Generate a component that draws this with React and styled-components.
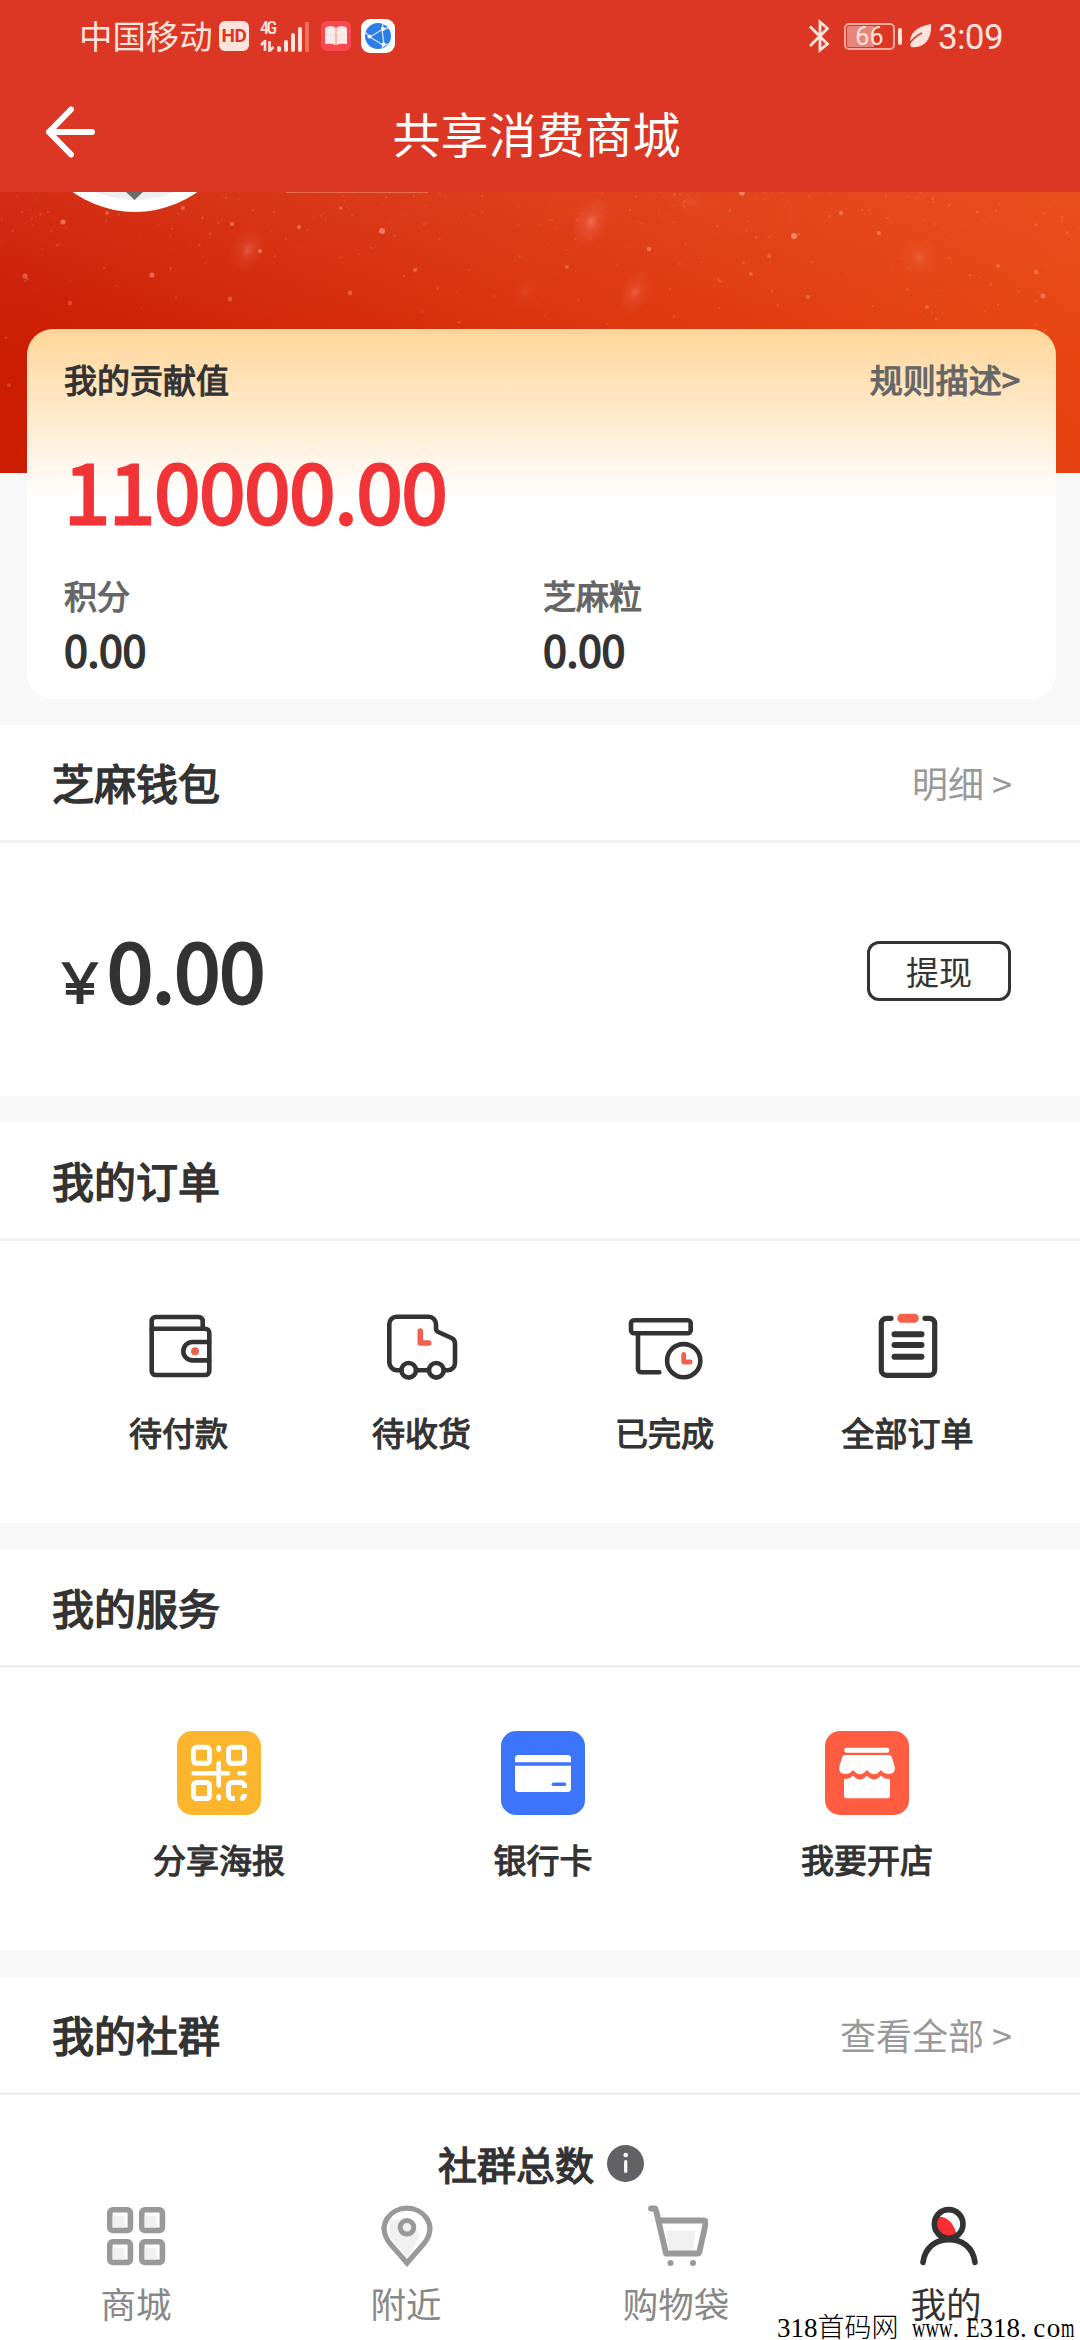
import styled, { createGlobalStyle } from 'styled-components';

const GlobalStyle = createGlobalStyle`
	* {
		box-sizing: border-box;
	}
	body {
		margin: 0;
		background: #f8f8f8;
		color: #333;
		font-family: 'Noto Sans CJK SC', 'Noto Sans', sans-serif;
	}
	svg {
		display: block;
		flex: none;
	}
`;

const Page = styled.div`
	position: relative;
	display: flex;
	flex-direction: column;
	width: 1080px;
	height: 2340px;
	overflow: hidden;
	background: #f8f8f8;
`;

/* status bar + title */

const TopBar = styled.header`
	flex: none;
	height: 192px;
	background: #db3724;
	color: #fff;
`;

const StatusBar = styled.div`
	display: flex;
	align-items: center;
	justify-content: space-between;
	height: 72px;
	padding: 0 77px 0 79px;
	color: #ffe3dc;
`;

const StatusGroup = styled.div`
	display: flex;
	align-items: center;
`;

const Carrier = styled.span`
	width: 140px;
	font-size: 33.4px;
	line-height: 40px;
	margin-top: -2px;
`;

const HdBadge = styled.span`
	width: 30px;
	height: 30px;
	border-radius: 6px;
	background: #ffe3dc;
	color: #db3724;
	font: 700 19px/30px Roboto, sans-serif;
	text-align: center;
	letter-spacing: -0.5px;
`;

const Network = styled.div`
	display: flex;
	width: 51px;
	height: 34px;
	margin: 0 10px 0 11px;
`;

const NetworkType = styled.div`
	display: flex;
	flex-direction: column;
	justify-content: space-between;
	width: 17px;
	padding: 1px 0;
	font: 500 18px/15px 'Roboto Condensed', Roboto, sans-serif;
	letter-spacing: -2.5px;
`;

const AppIcons = styled.div`
	display: flex;
	align-items: center;
	gap: 10px;
`;

const Battery = styled.div`
	display: flex;
	align-items: center;
	margin: 0 6px 0 15px;
`;

const BatteryBody = styled.div`
	width: 51px;
	height: 27px;
	border: 2px solid #f5a89c;
	border-radius: 5px;
	background: linear-gradient(to right, #e8857a 60%, transparent 60%);
	background-clip: content-box;
	padding: 1px;
	font: 400 25px/22px Roboto, sans-serif;
	text-align: center;
`;

const BatteryCap = styled.div`
	width: 4px;
	height: 17px;
	margin-left: 3px;
	border-radius: 2px;
	background: #ffe3dc;
`;

const Clock = styled.span`
	margin: 3px 0 0 6px;
	font: 400 35px/40px Roboto, sans-serif;
	letter-spacing: -0.6px;
`;

const TitleBar = styled.div`
	display: grid;
	grid-template-columns: 120px 1fr 120px;
	align-items: center;
	height: 120px;
`;

const Title = styled.h1`
	margin: 0;
	font-size: 48px;
	font-weight: 400;
	line-height: 56px;
	text-align: center;
	padding-right: 7px;
`;

/* hero + contribution card */

const Hero = styled.div`
	flex: none;
	height: 281px;
	overflow: hidden;
`;

const Card = styled.section`
	position: relative;
	flex: none;
	width: 1029px;
	height: 370px;
	margin: -144px 0 26px 27px;
	padding: 30px 36px 0 37px;
	border-radius: 26px;
	background: linear-gradient(#ffd699 0, #ffebcf 90px, #fff 168px);
`;

const CardHead = styled.div`
	display: flex;
	justify-content: space-between;
	line-height: 40px;
`;

const Bold = styled.span`
	color: ${({ $color }) => $color || '#333'};
	font-size: ${({ $size }) => $size}px;
	letter-spacing: ${({ $gap }) => $gap || 0}px;
	-webkit-text-stroke: ${({ $size }) => $size / 28}px currentColor;
`;

const Contribution = styled.div`
	display: flex;
	height: 81px;
	margin: 49px 0 46px;
	line-height: 81px;
`;

const Stats = styled.div`
	display: grid;
	grid-template-columns: 479px 1fr;
`;

const Stat = styled.div`
	display: flex;
	flex-direction: column;
	gap: 13px;
	line-height: 40px;
`;

/* sections */

const Section = styled.section`
	flex: none;
	height: ${({ $height }) => $height}px;
	margin-bottom: 27px;
	background: #fff;
`;

const SectionHead = styled.div`
	display: flex;
	align-items: center;
	justify-content: space-between;
	height: 118px;
	padding: 0 68px 1px 52px;
	border-bottom: 3px solid #f0f0f0;
	line-height: 56px;
`;

const More = styled.span`
	color: #999;
	font-size: 36px;
`;

const Wallet = styled.div`
	display: flex;
	align-items: center;
	justify-content: space-between;
	height: 253px;
	padding: 2px 69px 0 53px;
`;

const Amount = styled.div`
	display: flex;
	align-items: baseline;
	padding-top: 6px;
	line-height: 81px;
`;

const Withdraw = styled.button`
	width: 144px;
	height: 60px;
	padding: 0;
	border: 3px solid #333;
	border-radius: 12px;
	background: #fff;
	color: #333;
	font: 400 33px/50px 'Noto Sans CJK SC', sans-serif;
`;

const Entries = styled.div`
	display: grid;
	grid-template-columns: repeat(${({ $count }) => $count}, 1fr);
	width: 972px;
	margin-left: 57px;
	padding-top: ${({ $top }) => $top}px;
`;

const Entry = styled.div`
	display: flex;
	flex-direction: column;
	align-items: center;
	gap: ${({ $gap }) => $gap}px;
	line-height: 40px;
`;

const Tile = styled.div`
	width: 84px;
	height: 84px;
	border-radius: 15px;
	background: ${({ $color }) => $color};
`;

const Community = styled.div`
	display: flex;
	align-items: center;
	justify-content: center;
	gap: 13px;
	padding: 44px 0 0 2px;
	line-height: 48px;
`;

/* bottom tabs */

const TabBar = styled.nav`
	position: absolute;
	left: 0;
	bottom: 0;
	display: grid;
	grid-template-columns: repeat(4, 270px);
	width: 100%;
	height: 148px;
	padding: 12px 0 0 1px;
	background: #fff;
`;

const Tab = styled.div`
	display: flex;
	flex-direction: column;
	align-items: center;
	gap: 15px;
	color: ${({ $active }) => ($active ? '#333' : '#888')};
	font-size: 35.5px;
	line-height: 40px;
`;

const Watermark = styled.div`
	position: absolute;
	left: 777px;
	bottom: 0;
	height: 24px;
	color: #000;
	font: 27px/24px 'Liberation Serif', 'Noto Sans CJK SC', serif;
	white-space: pre;
`;

const Han = styled.span`
	font-weight: 300;
`;

const Squeeze = styled.span`
	display: inline-block;
	margin-right: -${({ $cut }) => $cut}px;
	transform: scaleX(${({ $x }) => $x});
	transform-origin: left;
`;

const Spaced = styled.span`
	letter-spacing: ${({ $gap }) => $gap}px;
`;

/* [x, y, radius, opacity] */
const brightStars = [
	[63, 30, 2.6, 0.5], [232, 32, 2, 0.5], [299, 35, 2, 0.5], [382, 39, 3, 0.55],
	[794, 44, 3, 0.6], [879, 41, 2, 0.5], [649, 57, 2.2, 0.5], [25, 84, 2.6, 0.4],
	[152, 83, 2.6, 0.45], [415, 78, 2, 0.4], [841, 21, 2, 0.5], [742, 1, 2.6, 0.6],
	[1036, 80, 2.2, 0.4], [1043, 104, 2.4, 0.5], [350, 101, 2.4, 0.35], [230, 107, 2.4, 0.35],
	[808, 105, 2, 0.4], [70, 111, 2.2, 0.3], [927, 115, 2, 0.35], [769, 64, 2, 0.35],
	[998, 74, 2, 0.35], [751, 82, 2, 0.35], [567, 75, 2, 0.35], [260, 59, 2, 0.5],
	[107, 21, 2, 0.35], [183, 16, 2, 0.4], [341, 16, 1.8, 0.4], [9, 193, 2, 0.25],
];

/* [x, y, rx, ry, opacity] */
const glows = [
	[591, 30, 18, 26, 0.5], [248, 58, 17, 24, 0.36], [919, 66, 20, 20, 0.28],
	[635, 100, 15, 24, 0.36], [525, 100, 13, 18, 0.14], [692, 10, 20, 14, 0.14], [790, 24, 14, 18, 0.06],
];

let seed = 7;
const random = () => {
	seed = (seed * 16807) % 2147483647;
	return seed / 2147483647;
};
const dust = Array.from({ length: 300 }, () => [
	random() * 1080,
	random() * random() * 190,
	0.7 + random() * 0.8,
	0.06 + random() * 0.2,
]);

const HeroArt = () => (
	<svg width="1080" height="281" viewBox="0 0 1080 281">
		<defs>
			<linearGradient id="sky" x1="0" y1="0.3" x2="1" y2="0">
				<stop offset="0" stopColor="#cc1d02" />
				<stop offset="0.45" stopColor="#dc350d" />
				<stop offset="1" stopColor="#ec4c12" />
			</linearGradient>
			<radialGradient id="glow">
				<stop offset="0" stopColor="#ffa08e" />
				<stop offset="0.35" stopColor="#ff8a7a" stopOpacity="0.4" />
				<stop offset="1" stopColor="#ff8a7a" stopOpacity="0" />
			</radialGradient>
			<linearGradient id="haze" x1="0" y1="0" x2="0" y2="1">
				<stop offset="0" stopColor="#e05a50" stopOpacity="0.2" />
				<stop offset="0.6" stopColor="#e05a50" stopOpacity="0" />
			</linearGradient>
		</defs>
		<rect width="1080" height="281" fill="url(#sky)" />
		<rect width="1080" height="281" fill="url(#haze)" />
		{glows.map(([x, y, rx, ry, o]) => (
			<ellipse key={x} cx={x} cy={y} rx={rx} ry={ry} fill="url(#glow)" opacity={o} transform={`rotate(25 ${x} ${y})`} />
		))}
		{[...dust, ...brightStars].map(([x, y, r, o], i) => (
			<circle key={i} cx={x} cy={y} r={r} fill="#ffb09c" opacity={o} />
		))}
		<rect x="286" width="142" height="1" fill="#e86a4c" />
		<circle cx="135" cy="-87" r="107" fill="#fff" />
		<circle cx="135" cy="-93" r="101" fill="#eee" />
		<path d="M126 0h17l-8.500 8z" fill="#6b6b6b" />
	</svg>
);

const BackIcon = () => (
	<svg width="120" height="60" viewBox="0 0 120 60">
		<path d="M71 7.500 49 30l22 22.500M49 30h43" fill="none" stroke="#fff" strokeWidth="6" strokeLinecap="round" strokeLinejoin="round" />
	</svg>
);

const SignalBars = () => (
	<svg width="34" height="34" viewBox="0 0 34 34" fill="#ffe3dc">
		<rect x="0" y="27" width="4" height="6" rx="2" />
		<rect x="7" y="21" width="4" height="12" rx="2" />
		<rect x="14" y="14" width="4" height="19" rx="2" />
		<rect x="21" y="8" width="4" height="25" rx="2" />
		<rect x="28" y="3" width="4" height="30" rx="1" fill="#f0705f" />
	</svg>
);

const DataArrows = () => (
	<svg width="15" height="12" viewBox="0 0 15 12">
		<path d="M1 5l4-4v10M9.500 1v10l4-4" fill="none" stroke="#ffe3dc" strokeWidth="2.600" />
	</svg>
);

const BookIcon = () => (
	<svg width="30" height="30" viewBox="0 0 30 30">
		<rect width="30" height="30" rx="6" fill="#fb4752" />
		<path d="M4 7q5.500-4 11 0 5.500-4 11 0v16q-5.500-1-11 1-5.500-2-11-1z" fill="#ffe9e6" />
		<path d="M15 6v18" stroke="#fba5a5" strokeWidth="1.500" />
	</svg>
);

const BrowserIcon = () => (
	<svg width="34" height="34" viewBox="0 0 34 34">
		<rect width="34" height="34" rx="9" fill="#fff" />
		<circle cx="17" cy="17" r="13" fill="#2b7de9" />
		<path d="M4 13l5 5 13 8M9 18 22 10M22 5l-1 5 2 16-2 3M22 10l6-1M22 26l7-1" fill="none" stroke="#cfe6ff" strokeWidth="1.300" />
		<g fill="#fff">
			<circle cx="8.500" cy="17.500" r="2" />
			<circle cx="22" cy="10" r="2" />
			<circle cx="22.500" cy="25.500" r="2" />
		</g>
	</svg>
);

const BluetoothIcon = () => (
	<svg width="20" height="34" viewBox="0 0 20 34">
		<path d="M1 7.500 18.500 25 11 31V3l7.500 6.500L1 27" fill="none" stroke="#ffe3dc" strokeWidth="2.800" />
	</svg>
);

const LeafIcon = () => (
	<svg width="24" height="24" viewBox="0 0 24 24">
		<path d="M23 0C24 14 17 25 3 23 0 14 4 3 23 0z" fill="#ffe3dc" />
		<path d="M0 22Q5 13 14 9" fill="none" stroke="#db3724" strokeWidth="1.500" />
	</svg>
);

const ink = { fill: 'none', stroke: '#333', strokeWidth: 4.6, strokeLinecap: 'round', strokeLinejoin: 'round' };

const WalletIcon = () => (
	<svg width="72" height="72" viewBox="0 0 72 72" {...ink}>
		<path d="M8.700 18.700V11a4 4 0 0 1 4-4h43a4 4 0 0 1 4 4v7.700" />
		<path d="M8.700 18.700h53.600a4 4 0 0 1 4 4V61a4 4 0 0 1-4 4H12.700a4 4 0 0 1-4-4z" />
		<path d="M66.300 32H49.500a9.200 9.200 0 0 0 0 18.400h16.800" />
		<circle cx="52" cy="41.300" r="4" fill="#f0604d" stroke="none" />
	</svg>
);

const TruckIcon = () => (
	<svg width="72" height="72" viewBox="0 0 72 72" {...ink}>
		<path d="M15.400 60.300H11a8 8 0 0 1-7.700-8V14a7.300 7.300 0 0 1 7.300-7.300h32A7.400 7.400 0 0 1 50 14v4.500a4 4 0 0 0 2.200 3.500l13.300 6a6 6 0 0 1 3.500 5.500V53a7.300 7.300 0 0 1-7.300 7.300H58M30 60.300h12.700" />
		<circle cx="22.700" cy="60.300" r="7.300" />
		<circle cx="50.300" cy="60.300" r="7.300" />
		<path d="M34.300 21v12h8.500" stroke="#f0604d" strokeWidth="5.500" />
	</svg>
);

const DoneIcon = () => (
	<svg width="76" height="72" viewBox="-2 0 76 72" {...ink}>
		<rect x="2" y="10.300" width="59.700" height="13" rx="3" />
		<path d="M9 23.300V59a3.300 3.300 0 0 0 3.300 3.300h18" />
		<circle cx="54.700" cy="50.700" r="16.600" />
		<path d="M54.700 44.500v7.500h6.500" stroke="#f0604d" strokeWidth="4.800" />
	</svg>
);

const ListIcon = () => (
	<svg width="72" height="72" viewBox="0 0 72 72" {...ink} strokeWidth="5.200">
		<path d="M19 8.300h-4.500a5.200 5.200 0 0 0-5.200 5.200v46.600a5.200 5.200 0 0 0 5.200 5.200h43a5.200 5.200 0 0 0 5.200-5.200V13.500a5.200 5.200 0 0 0-5.200-5.200H53" />
		<path d="M22.500 24.200h27M22.500 35h27M22.500 46.700h27" strokeWidth="6" />
		<rect x="25.300" y="3.700" width="21.500" height="9" rx="4.500" fill="#f9604a" stroke="none" />
	</svg>
);

const QrIcon = () => (
	<svg width="84" height="84" viewBox="0 0 84 84" fill="none" stroke="#fff" strokeWidth="5" strokeLinecap="round">
		<rect x="16.500" y="16.300" width="16" height="16" rx="3" />
		<rect x="51.500" y="16.300" width="16" height="16" rx="3" />
		<rect x="16.500" y="51.500" width="16" height="16" rx="3" />
		<path d="M41.700 16.500v2M41.700 32v22.500M41.700 65.300v2.200M16.500 42.300h34.500M62.500 42.300h5" strokeWidth="4.600" />
		<path d="M58 67.500h-3a3.500 3.500 0 0 1-3.500-3.500v-9a3.500 3.500 0 0 1 3.500-3.500h9a3.500 3.500 0 0 1 3.500 3.500v2M67.500 63q0 4.500-4 4.500" strokeLinecap="butt" />
	</svg>
);

const BankIcon = () => (
	<svg width="84" height="84" viewBox="0 0 84 84">
		<rect x="14" y="24" width="56" height="37" rx="3.500" fill="#fff" />
		<path d="M14 33h56" stroke="#3c75fb" strokeWidth="3.300" />
		<path d="M52.500 53.300h11" stroke="#3c75fb" strokeWidth="3.600" strokeLinecap="round" />
	</svg>
);

const ShopIcon = () => (
	<svg width="84" height="84" viewBox="0 0 84 84" fill="#fff">
		<rect x="19.300" y="16.700" width="45" height="5" rx="2.200" />
		<path d="M20 24h44q2 0 2.600 1.800l3.100 9.700c1.800 9-9.700 9.500-13.700 3.500q-7 8.500-14 0-7 8.500-14 0c-4 6-15.500 5.500-13.700-3.500l3.100-9.700Q18 24 20 24z" />
		<path d="M19 48q5 .5 9-3.500 7 8 14 0 7 8 14 0 4 4 9 3.500v17a2.300 2.300 0 0 1-2.300 2.300H21.300A2.300 2.300 0 0 1 19 65z" />
	</svg>
);

const InfoIcon = () => (
	<svg width="37" height="37" viewBox="0 0 37 37">
		<circle cx="18.500" cy="18.500" r="18.500" fill="#626266" />
		<circle cx="18.700" cy="10" r="2.300" fill="#fff" />
		<path d="M18.700 16.500v10" stroke="#fff" strokeWidth="3.200" strokeLinecap="round" />
	</svg>
);

const MallIcon = () => (
	<svg width="64" height="64" viewBox="0 0 64 64">
		{[3, 35].map((y) =>
			[3, 35].map((x) => (
				<g key={`${x}${y}`}>
					<rect x={x + 2.8} y={y + 2.8} width="20.600" height="20.600" rx="3" fill="#fff" stroke="#999" strokeWidth="5.600" />
					<path d={`M${x + 5.6} ${y + 9}h9a3 3 0 0 1 3 3v8.500h-12z`} fill="#f0f0f0" />
				</g>
			))
		)}
	</svg>
);

const NearbyIcon = () => (
	<svg width="64" height="64" viewBox="0 0 64 64">
		<path d="M15 17q22-6 31 15l-13 22-17-21z" fill="#f0f0f0" />
		<path d="M33 59 15.500 39C2 20 17 4.200 33 4.200S64 20 50.500 39z" fill="none" stroke="#999" strokeWidth="5.200" />
		<circle cx="33" cy="23.300" r="6.800" fill="#f0f0f0" stroke="#999" strokeWidth="5" />
	</svg>
);

const CartIcon = () => (
	<svg width="64" height="64" viewBox="0 0 64 64">
		<path d="M22 26.700h29.500L49 46.500H25z" fill="#f0f0f0" />
		<path d="M7 4.500h4.200q1.300 3 1.800 6l9 39h31.500q1.500 0 2-2l6.300-28.500q.5-2.500-2-2.500H15" fill="none" stroke="#999" strokeWidth="5.800" strokeLinecap="round" strokeLinejoin="round" />
		<circle cx="26.500" cy="59" r="3" fill="#999" />
		<circle cx="49" cy="59" r="3" fill="#999" />
	</svg>
);

const MineIcon = () => (
	<svg width="64" height="64" viewBox="0 0 64 64">
		<path d="M22 13q16-2 21 19-8 5-16 0-7-7-5-19z" fill="#fb2f33" />
		<g fill="none" stroke="#333" strokeWidth="5.700" strokeLinecap="round">
			<circle cx="34.700" cy="20" r="14.300" />
			<path d="M9 58.300C11 43 22 35.600 35 35.600S59 43 61 58.300" />
		</g>
	</svg>
);

const orders = [
	{ label: '待付款', icon: <WalletIcon /> },
	{ label: '待收货', icon: <TruckIcon /> },
	{ label: '已完成', icon: <DoneIcon /> },
	{ label: '全部订单', icon: <ListIcon /> },
];

const services = [
	{ label: '分享海报', color: '#fcb62d', icon: <QrIcon /> },
	{ label: '银行卡', color: '#3c75fb', icon: <BankIcon /> },
	{ label: '我要开店', color: '#ff5c41', icon: <ShopIcon /> },
];

const tabs = [
	{ label: '商城', icon: <MallIcon /> },
	{ label: '附近', icon: <NearbyIcon /> },
	{ label: '购物袋', icon: <CartIcon /> },
	{ label: '我的', icon: <MineIcon />, active: true },
];

const Heading = ({ title, more }) => (
	<SectionHead>
		<Bold $size={42}>{title}</Bold>
		{more && <More>{more}</More>}
	</SectionHead>
);

const App = () => {
	return (
		<Page>
			<GlobalStyle />
			<TopBar>
				<StatusBar>
					<StatusGroup>
						<Carrier>中国移动</Carrier>
						<HdBadge>HD</HdBadge>
						<Network>
							<NetworkType>
								4G
								<DataArrows />
							</NetworkType>
							<SignalBars />
						</Network>
						<AppIcons>
							<BookIcon />
							<BrowserIcon />
						</AppIcons>
					</StatusGroup>
					<StatusGroup>
						<BluetoothIcon />
						<Battery>
							<BatteryBody>66</BatteryBody>
							<BatteryCap />
						</Battery>
						<LeafIcon />
						<Clock>3:09</Clock>
					</StatusGroup>
				</StatusBar>
				<TitleBar>
					<BackIcon />
					<Title>共享消费商城</Title>
				</TitleBar>
			</TopBar>

			<Hero>
				<HeroArt />
			</Hero>

			<Card>
				<CardHead>
					<Bold $size={33}>我的贡献值</Bold>
					<Bold $size={33} $color="#666">规则描述&gt;</Bold>
				</CardHead>
				<Contribution>
					<Bold $size={83} $gap={-1} $color="#f13437">110000.00</Bold>
				</Contribution>
				<Stats>
					<Stat>
						<Bold $size={33} $color="#666">积分</Bold>
						<Bold $size={43} $gap={-0.4}>0.00</Bold>
					</Stat>
					<Stat>
						<Bold $size={33} $color="#666">芝麻粒</Bold>
						<Bold $size={43} $gap={-0.4}>0.00</Bold>
					</Stat>
				</Stats>
			</Card>

			<Section $height={371}>
				<Heading title="芝麻钱包" more="明细 >" />
				<Wallet>
					<Amount>
						<Bold $size={54}>￥</Bold>
						<Bold $size={83} $gap={-1}>0.00</Bold>
					</Amount>
					<Withdraw>提现</Withdraw>
				</Wallet>
			</Section>

			<Section $height={400}>
				<Heading title="我的订单" />
				<Entries $count={4} $top={69}>
					{orders.map(({ label, icon }) => (
						<Entry key={label} $gap={30}>
							{icon}
							<Bold $size={33}>{label}</Bold>
						</Entry>
					))}
				</Entries>
			</Section>

			<Section $height={400}>
				<Heading title="我的服务" />
				<Entries $count={3} $top={63}>
					{services.map(({ label, color, icon }) => (
						<Entry key={label} $gap={24}>
							<Tile $color={color}>{icon}</Tile>
							<Bold $size={33}>{label}</Bold>
						</Entry>
					))}
				</Entries>
			</Section>

			<Section $height={364}>
				<Heading title="我的社群" more="查看全部 >" />
				<Community>
					<Bold $size={39}>社群总数</Bold>
					<InfoIcon />
				</Community>
			</Section>

			<TabBar>
				{tabs.map(({ label, icon, active }) => (
					<Tab key={label} $active={active}>
						{icon}
						{label}
					</Tab>
				))}
			</TabBar>

			<Watermark>
				318<Han>首码网</Han>
				<Spaced $gap={6.7}>{' '}</Spaced>
				<Squeeze $x={0.69} $cut={18}>www</Squeeze>
				<Spaced $gap={6.7}>.</Spaced>
				<Squeeze $x={0.82} $cut={3}>E</Squeeze>
				318<Spaced $gap={6.7}>.</Spaced>
				<Spaced $gap={1.3}>co</Spaced>
				<Squeeze $x={0.64} $cut={7.5}>m</Squeeze>
			</Watermark>
		</Page>
	);
};

export default App;
